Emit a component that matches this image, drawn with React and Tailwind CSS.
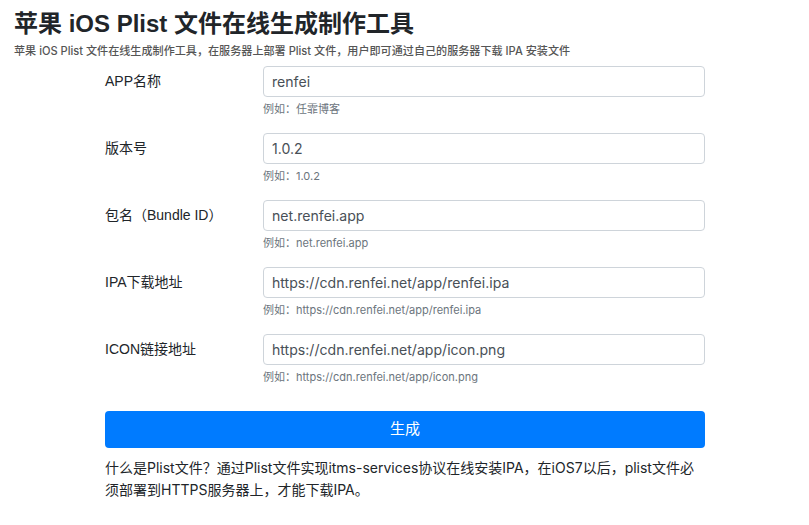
import React from 'react';

const font = { fontFamily: '"Liberation Sans", "Noto Sans CJK SC", sans-serif' };
const sf = { fontFamily: 'Inter, "Noto Sans CJK SC", sans-serif' };

const fields = [
    { label: 'APP名称', value: 'renfei', hint: '例如：任霏博客' },
    { label: '版本号', value: '1.0.2', hint: '例如：1.0.2' },
    { label: '包名（Bundle ID）', value: 'net.renfei.app', hint: '例如：net.renfei.app' },
    { label: 'IPA下载地址', value: 'https://cdn.renfei.net/app/renfei.ipa', hint: '例如：https://cdn.renfei.net/app/renfei.ipa' },
    { label: 'ICON链接地址', value: 'https://cdn.renfei.net/app/icon.png', hint: '例如：https://cdn.renfei.net/app/icon.png' },
];

function App() {
    return (
        <div className="min-h-screen bg-white text-[#212529]" style={font}>
            {/* Header */}
            <div className="px-[14px] pt-[9px]">
                <h1 className="text-[24px] leading-[29px] font-bold">苹果 iOS Plist 文件在线生成制作工具</h1>
                <p className="mt-[6px] text-[11.1px] leading-[14px] font-medium text-[#555]" style={sf}>
                    苹果 iOS Plist 文件在线生成制作工具，在服务器上部署 Plist 文件，用户即可通过自己的服务器下载 IPA 安装文件
                </p>
            </div>

            {/* Form */}
            <div className="w-[600px] ml-[105px] mt-[8px]">
                {fields.map((f) => (
                    <div key={f.label} className="flex mb-[16px]">
                        <label className="w-[158px] h-[31px] flex items-center text-[14px]">{f.label}</label>
                        <div className="flex-1">
                            <input
                                type="text"
                                defaultValue={f.value}
                                className="w-full h-[31px] px-[8px] border border-[#ced4da] rounded-[4px] text-[14.1px] text-[#495057] outline-none"
                                style={sf}
                            />
                            <div className="mt-[4px] text-[11px] leading-[16px] text-[#6c757d]" style={sf}>{f.hint}</div>
                        </div>
                    </div>
                ))}

                <button className="w-full h-[37px] mt-[10px] bg-[#007bff] rounded-[4px] text-white text-[15px]" style={font}>
                    生成
                </button>

                <p className="mt-[9px] text-[14px] leading-[22px]" style={sf}>
                    什么是Plist文件？通过Plist文件实现itms-services协议在线安装IPA，在iOS7以后，plist文件必须部署到HTTPS服务器上，才能下载IPA。
                </p>
            </div>
        </div>
    );
}

export default App;
